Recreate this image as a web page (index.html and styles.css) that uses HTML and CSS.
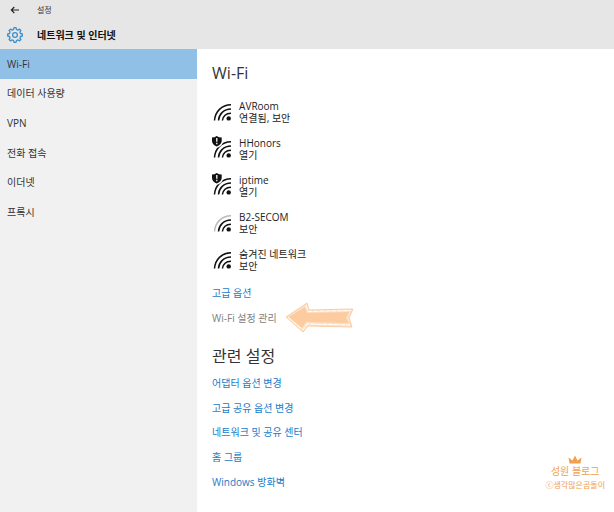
FILE: index.html
```html
<!DOCTYPE html>
<html lang="ko">
<head>
<meta charset="utf-8">
<meta name="viewport" content="width=device-width, initial-scale=1">
<title>설정</title>
<link rel="stylesheet" href="styles.css">
</head>
<body>
<svg class="defs" aria-hidden="true">
  <symbol id="wifi" viewBox="0 0 22 25">
    <g fill="none" stroke="currentColor" stroke-width="1.5">
      <path class="outer" d="M3.500 21.500C4.200 12.500 10.500 6 20 5.800"/>
      <path d="M7.500 21.500C8 15 12.800 10.200 20 10"/>
      <path d="M11.400 21.500C12 17.300 15 14.400 20 14.200"/>
    </g>
    <circle cx="17.700" cy="19.400" r="2.200" fill="currentColor"/>
  </symbol>
  <symbol id="shield" viewBox="0 0 22 25">
    <path d="M0 0H12V6Q11 10 7 11.500H0Z" fill="#fff"/>
    <path d="M1 1.500Q3.500 1.500 5.700 0Q8 1.500 10.700 1.500V5Q10.300 8.700 5.700 10.500Q1.200 8.700 1 5Z" fill="currentColor"/>
    <path d="M5.800 2V5.800M5.800 6.800V8.200" stroke="#fff" stroke-width="1.300"/>
  </symbol>
</svg>

<header class="top">
  <div class="titlebar">
    <button class="back" type="button" aria-label="뒤로">
      <svg width="10" height="8" viewBox="0 0 10 8"><path d="M9 4H1.500M4.300 1L1.300 4L4.300 7" fill="none" stroke="#222" stroke-width="1.100"/></svg>
    </button>
    <span>설정</span>
  </div>
  <div class="heading">
    <svg class="gear" width="16" height="16" viewBox="0 0 16 16" fill="none" stroke="#3d8ecb" stroke-width="1.300" stroke-linejoin="round">
      <path d="M6.500 2.500L7 .700H9L9.500 2.500L10.900 3.100L12.500 2.100L13.900 3.500L12.900 5.100L13.500 6.500L15.300 7V9L13.500 9.500L12.900 10.900L13.900 12.500L12.500 13.900L10.900 12.900L9.500 13.500L9 15.300H7L6.500 13.500L5.100 12.900L3.500 13.900L2.100 12.500L3.100 10.900L2.500 9.500L.700 9V7L2.500 6.500L3.100 5.100L2.100 3.500L3.500 2.100L5.100 3.100Z"/>
      <circle cx="8" cy="8" r="2.400"/>
    </svg>
    <h1>네트워크 및 인터넷</h1>
  </div>
</header>

<div class="body">
  <nav class="side">
    <ul>
      <li><a href="#wifi-page" aria-current="page">Wi-Fi</a></li>
      <li><a href="#data">데이터 사용량</a></li>
      <li><a href="#vpn">VPN</a></li>
      <li><a href="#dialup">전화 접속</a></li>
      <li><a href="#ethernet">이더넷</a></li>
      <li><a href="#proxy">프록시</a></li>
    </ul>
  </nav>

  <main class="content" id="wifi-page">
    <h2>Wi-Fi</h2>
    <ul class="networks">
      <li><svg class="signal"><use href="#wifi"/></svg><div>AVRoom<br>연결됨, 보안</div></li>
      <li><svg class="signal"><use href="#wifi"/><use href="#shield"/></svg><div>HHonors<br>열기</div></li>
      <li><svg class="signal"><use href="#wifi"/><use href="#shield"/></svg><div>iptime<br>열기</div></li>
      <li><svg class="signal weak"><use href="#wifi"/></svg><div>B2-SECOM<br>보안</div></li>
      <li><svg class="signal"><use href="#wifi"/></svg><div>숨겨진 네트워크<br>보안</div></li>
    </ul>
    <ul class="links options">
      <li><a href="#advanced">고급 옵션</a></li>
      <li>
        <a class="muted" href="#manage">Wi-Fi 설정 관리</a>
        <svg class="arrow" width="70" height="32" viewBox="0 0 70 32">
          <path d="M1 15L22 1L24 8L68 7L64 16L67 25L23 24L18 30Z" fill="#fde0c6" stroke="#fbcda4" stroke-width="1"/>
          <path d="M4 15L20 5L22 11L64 10L61 16L64 21L21 20L17 26Z" fill="#fccb9f"/>
          <path d="M3 15.500L18 28L22 22L65 23M21 3L23 9.500L66 8.500" fill="none" stroke="#fff" stroke-width="1" stroke-dasharray="5 1"/>
        </svg>
      </li>
    </ul>
    <h2>관련 설정</h2>
    <ul class="links related">
      <li><a href="#adapter">어댑터 옵션 변경</a></li>
      <li><a href="#sharing">고급 공유 옵션 변경</a></li>
      <li><a href="#center">네트워크 및 공유 센터</a></li>
      <li><a href="#homegroup">홈 그룹</a></li>
      <li><a href="#firewall">Windows 방화벽</a></li>
    </ul>
  </main>
</div>

<aside class="mark">
  <svg width="14" height="9" viewBox="0 0 14 9"><path d="M.500 2.500L4.500 5.500L7 .500L9.500 5.500L13.500 2.500L12.500 8.500H1.500Z" fill="#f0a04f"/></svg>
  <span class="mark-name">성원 블로그</span>
  <span class="mark-sub">ⓒ생각많은곰돌이</span>
</aside>
</body>
</html>
```
FILE: styles.css
```css
* { box-sizing: border-box; }

body {
  margin: 0;
  min-height: 100vh;
  display: flex;
  flex-direction: column;
  background: #fff;
  color: #333;
  font: 10px/12px "Open Sans", "Noto Sans CJK KR", sans-serif;
}

ul { list-style: none; margin: 0; padding: 0; }
a { color: inherit; text-decoration: none; }
svg { flex: none; }
.defs { position: absolute; width: 0; height: 0; }

.top { background: #e6e6e6; }

.titlebar {
  display: flex;
  align-items: center;
  gap: 17px;
  height: 20px;
  padding-left: 10px;
  font-size: 8px;
}

.back {
  display: flex;
  padding: 0;
  border: 0;
  background: none;
}

.heading {
  display: flex;
  align-items: center;
  gap: 14px;
  height: 29px;
  padding-left: 7px;
}

h1 {
  margin: 0;
  color: #111;
  font-size: 10px;
  font-weight: 700;
}

.body { flex: 1; display: flex; }

.side {
  flex: none;
  width: 32.1%;
  background: #f1f1f1;
}

.side ul {
  display: grid;
  grid-auto-rows: 1fr;
  height: 178px;
}

.side a {
  display: flex;
  align-items: center;
  height: 100%;
  padding-left: 7px;
}

.side a[aria-current] { background: #91c0e7; }

.content { flex: 1; padding: 14px 15px 0; }

h2 {
  margin: 0;
  font-size: 16px;
  font-weight: 400;
  line-height: 20px;
}

.networks {
  margin-top: 16px;
  color: #222;
}

.networks li {
  display: flex;
  gap: 6px;
  height: 37px;
}

.networks div { padding-top: 1px; }

.signal {
  width: 22px;
  height: 25px;
  margin-left: -1px;
  color: #111;
}

.weak { --outer: #bbb; }
.outer { stroke: var(--outer, currentColor); }

.links {
  display: grid;
  grid-auto-rows: 1fr;
  color: #1a7bc8;
}

.links li { display: flex; align-items: center; }

.options { height: 49px; margin: -3px 0 16px; }
.muted { color: #808080; }
.arrow { margin: -4px 0 -4px 8px; }
.related { height: 123px; margin-top: 5px; }

.mark {
  position: absolute;
  right: 9px;
  bottom: 21px;
  display: flex;
  flex-direction: column;
  align-items: center;
  color: #f0a04f;
}

.mark-name { font-size: 10px; line-height: 15px; }
.mark-sub { font-size: 8px; line-height: 12px; }
```
